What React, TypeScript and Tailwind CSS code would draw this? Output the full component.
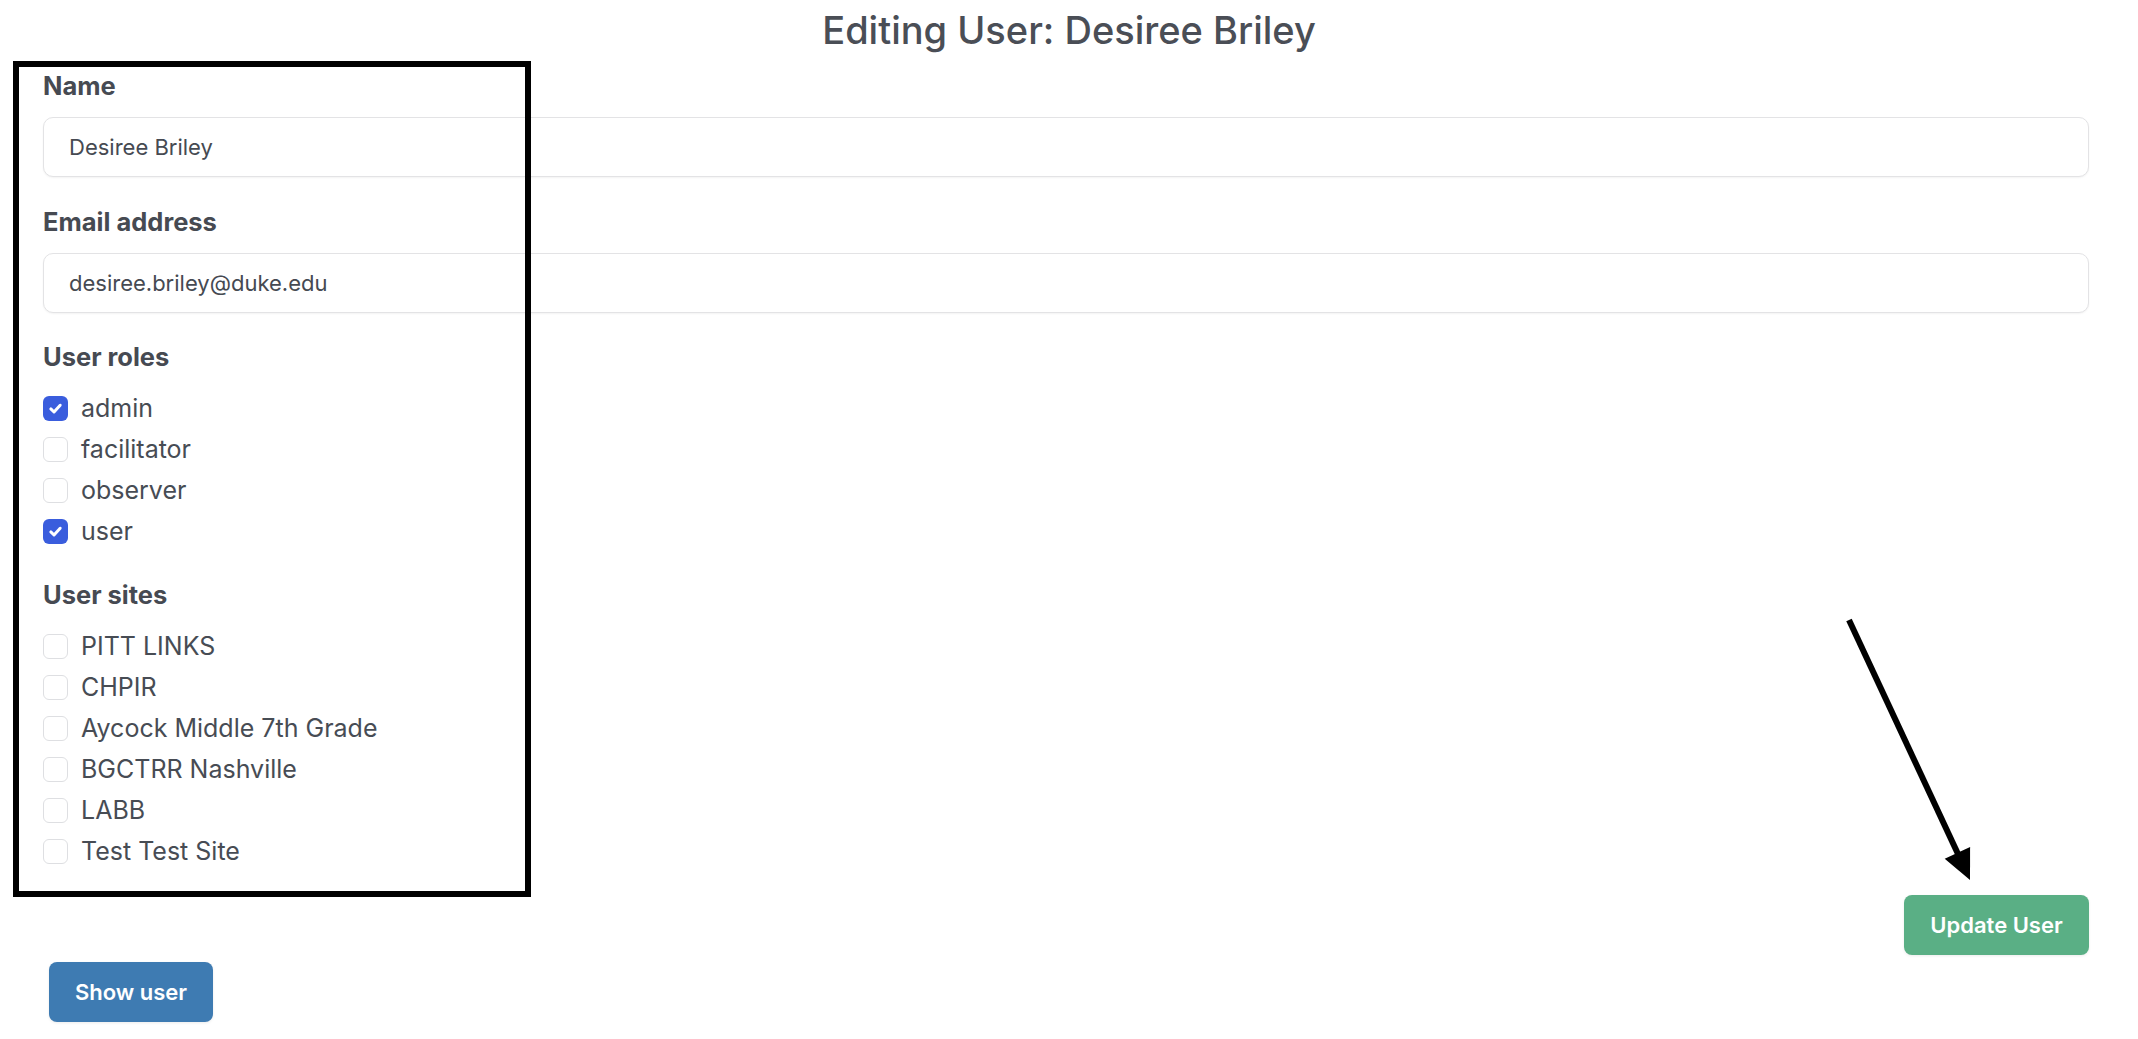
import React from "react";

const roles = [
  { name: "admin", checked: true },
  { name: "facilitator", checked: false },
  { name: "observer", checked: false },
  { name: "user", checked: true },
];

const sites = ["PITT LINKS", "CHPIR", "Aycock Middle 7th Grade", "BGCTRR Nashville", "LABB", "Test Test Site"];

function Box({ checked }: { checked: boolean }) {
  if (checked) {
    return (
      <span className="flex h-[25px] w-[25px] shrink-0 items-center justify-center rounded-[6px] bg-[#3a5ddd]">
        <svg width="17" height="17" viewBox="0 0 16 16" fill="none">
          <path d="M3.6 8.4 L6.6 11.3 L12.4 4.9" stroke="white" strokeWidth="2.8" strokeLinecap="round" strokeLinejoin="round" />
        </svg>
      </span>
    );
  }
  return <span className="block h-[25px] w-[25px] shrink-0 rounded-[6px] border border-[#dedfe2] bg-white" />;
}

function Row({ label, checked }: { label: string; checked: boolean }) {
  return (
    <div className="flex h-[41px] items-center gap-[13px]">
      <Box checked={checked} />
      <span className="text-[25px] leading-none text-[#474c54]">{label}</span>
    </div>
  );
}

function Label({ children }: { children: React.ReactNode }) {
  return <div className="h-[36px] text-[25.5px] font-bold leading-[36px] text-[#464a52]">{children}</div>;
}

function Field({ value }: { value: string }) {
  return (
    <div className="mt-[13px] flex h-[60px] items-center rounded-[10px] border border-[#e3e3e5] bg-white pl-[25px] text-[22px] text-[#464a52] shadow-[0_1px_2px_rgba(0,0,0,0.05)]">
      {value}
    </div>
  );
}

export default function App() {
  return (
    <div className="relative min-h-screen bg-white font-['Inter',sans-serif]">
      <div className="h-[61px] pt-[11px] text-center text-[38px] font-medium leading-none text-[#4a4e56]">
        Editing User: Desiree Briley
      </div>

      <div className="pl-[43px] pr-[49px]">
        <div className="pt-[7px]">
          <Label>Name</Label>
          <Field value="Desiree Briley" />
        </div>
        <div className="pt-[27px]">
          <Label>Email address</Label>
          <Field value="desiree.briley@duke.edu" />
        </div>
        <div className="pt-[26px]">
          <Label>User roles</Label>
          <div className="mt-[13px] flex flex-col">
            {roles.map((r) => (
              <Row key={r.name} label={r.name} checked={r.checked} />
            ))}
          </div>
        </div>
        <div className="pt-[25px]">
          <Label>User sites</Label>
          <div className="mt-[13px] flex flex-col">
            {sites.map((s) => (
              <Row key={s} label={s} checked={false} />
            ))}
          </div>
        </div>
        <div className="mt-[23px] flex justify-end">
          <button className="h-[60px] w-[185px] rounded-[8px] bg-[#5aaf85] text-[22px] font-semibold text-white shadow-[0_1px_3px_rgba(0,0,0,0.08)]">
            Update User
          </button>
        </div>
      </div>

      <div className="mt-[7px] pl-[49px]">
        <button className="h-[60px] w-[164px] rounded-[8px] bg-[#3e7bb2] text-[22px] font-semibold text-white shadow-[0_1px_3px_rgba(0,0,0,0.08)]">
          Show user
        </button>
      </div>

      {/* annotation box */}
      <div className="pointer-events-none absolute left-[13px] top-[61px] h-[836px] w-[518px] border-[6px] border-black" />

      {/* annotation arrow */}
      <svg className="pointer-events-none absolute left-[1830px] top-[600px]" width="160" height="300" viewBox="0 0 160 300">
        <line x1="19" y1="20" x2="128" y2="254" stroke="black" strokeWidth="6" />
        <polygon points="140,280 114.7,258.7 140.1,246.9" fill="black" />
      </svg>
    </div>
  );
}
